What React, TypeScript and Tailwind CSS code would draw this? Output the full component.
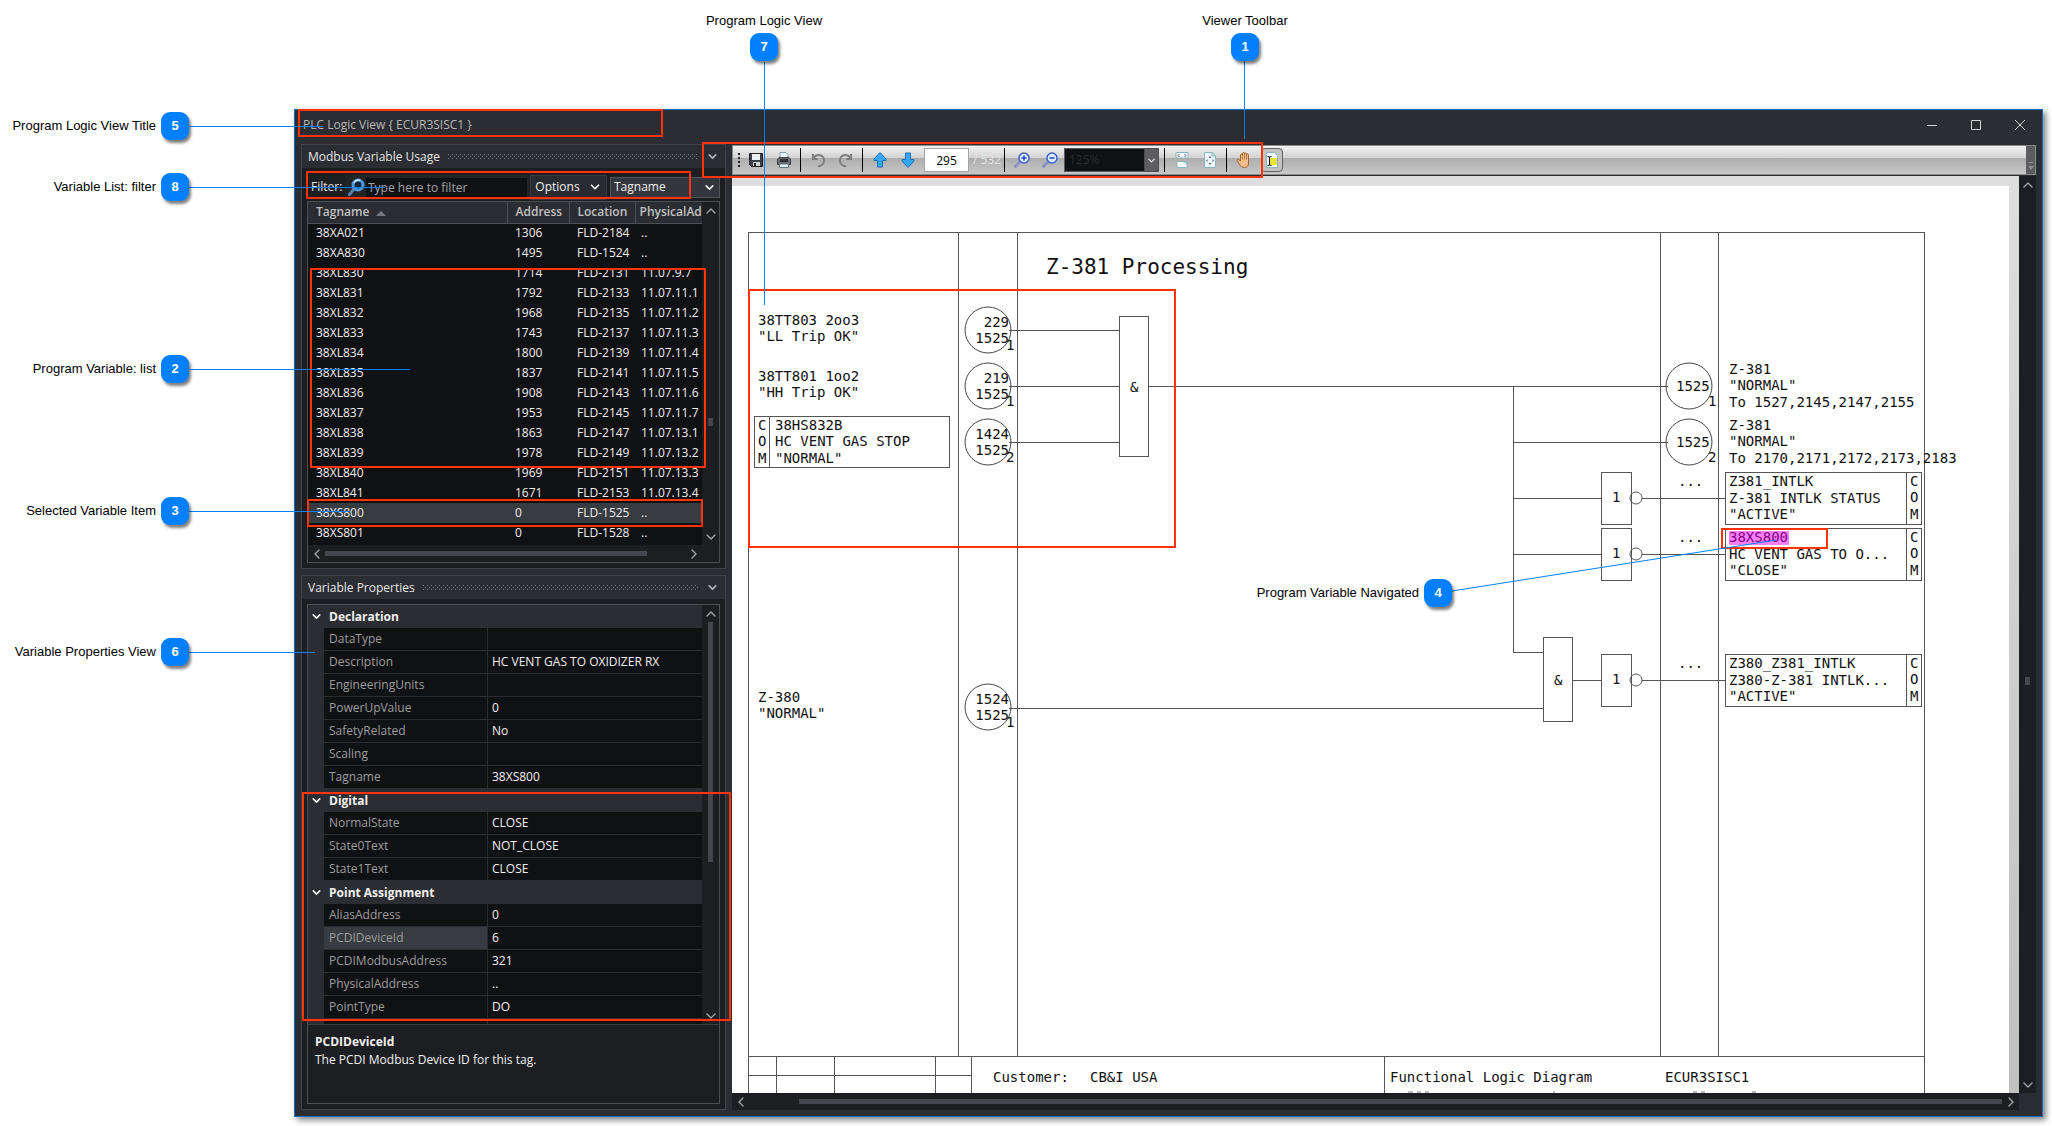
import React from 'react';
import { ChevronDown, ChevronLeft, ChevronRight, ChevronUp } from 'lucide-react';

const variables = [
  ['38XA021', '1306', 'FLD-2184', '..'],
  ['38XA830', '1495', 'FLD-1524', '..'],
  ['38XL830', '1714', 'FLD-2131', '11.07.9.7'],
  ['38XL831', '1792', 'FLD-2133', '11.07.11.1'],
  ['38XL832', '1968', 'FLD-2135', '11.07.11.2'],
  ['38XL833', '1743', 'FLD-2137', '11.07.11.3'],
  ['38XL834', '1800', 'FLD-2139', '11.07.11.4'],
  ['38XL835', '1837', 'FLD-2141', '11.07.11.5'],
  ['38XL836', '1908', 'FLD-2143', '11.07.11.6'],
  ['38XL837', '1953', 'FLD-2145', '11.07.11.7'],
  ['38XL838', '1863', 'FLD-2147', '11.07.13.1'],
  ['38XL839', '1978', 'FLD-2149', '11.07.13.2'],
  ['38XL840', '1969', 'FLD-2151', '11.07.13.3'],
  ['38XL841', '1671', 'FLD-2153', '11.07.13.4'],
  ['38XS800', '0', 'FLD-1525', '..'],
  ['38XS801', '0', 'FLD-1528', '..'],
];

const propertyGroups = [
  {
    title: 'Declaration',
    rows: [
      ['DataType', ''],
      ['Description', 'HC VENT GAS TO OXIDIZER RX'],
      ['EngineeringUnits', ''],
      ['PowerUpValue', '0'],
      ['SafetyRelated', 'No'],
      ['Scaling', ''],
      ['Tagname', '38XS800'],
    ],
  },
  {
    title: 'Digital',
    rows: [
      ['NormalState', 'CLOSE'],
      ['State0Text', 'NOT_CLOSE'],
      ['State1Text', 'CLOSE'],
    ],
  },
  {
    title: 'Point Assignment',
    rows: [
      ['AliasAddress', '0'],
      ['PCDIDeviceId', '6'],
      ['PCDIModbusAddress', '321'],
      ['PhysicalAddress', '..'],
      ['PointType', 'DO'],
      ['', ''],
    ],
  },
];

/* ---------- shared bits ---------- */

const PanelHeader: React.FC<{ title: string }> = ({ title }) => (
  <div className="flex h-[23px] shrink-0 items-center bg-[#2c2d32] pl-[6px] pr-[6px]">
    <h2 className="whitespace-nowrap text-[12px] leading-4 text-[#e6e6e6]">{title}</h2>
    <svg className="ml-2 h-[5px] min-w-0 flex-1" aria-hidden="true">
      <defs>
        <pattern id="grip" width="4" height="4" patternUnits="userSpaceOnUse">
          <rect width="1" height="1" fill="#77787d" />
          <rect x="2" y="2" width="1" height="1" fill="#77787d" />
        </pattern>
      </defs>
      <rect width="100%" height="5" fill="url(#grip)" />
    </svg>
    <button aria-label={`${title} menu`} className="ml-2 text-[#b5b5b8]">
      <ChevronDown size={13} strokeWidth={3} />
    </button>
  </div>
);

interface ScrollProps {
  before: string;
  thumb: string;
}

const VScroll: React.FC<ScrollProps> = ({ before, thumb }) => (
  <div className="flex w-[17px] shrink-0 flex-col items-center bg-[#1d1e22] text-[#a5a5a8]">
    <button aria-label="Scroll up" className="flex h-[17px] items-center"><ChevronUp size={16} /></button>
    <div className="flex min-h-0 flex-1 flex-col">
      <div className={before} />
      <div className={`w-[5px] bg-[#46464e] ${thumb}`} />
    </div>
    <button aria-label="Scroll down" className="flex h-[17px] items-center"><ChevronDown size={16} /></button>
  </div>
);

const HScroll: React.FC<ScrollProps> = ({ before, thumb }) => (
  <div className="flex h-[17px] shrink-0 items-center bg-[#1d1e22] text-[#a5a5a8]">
    <button aria-label="Scroll left" className="flex w-[17px] justify-center"><ChevronLeft size={16} /></button>
    <div className="flex min-w-0 flex-1">
      <div className={before} />
      <div className={`h-[5px] bg-[#46464e] ${thumb}`} />
    </div>
    <button aria-label="Scroll right" className="flex w-[17px] justify-center"><ChevronRight size={16} /></button>
  </div>
);

/* ---------- left column ---------- */

const SearchIcon = () => (
  <svg width="18" height="18" viewBox="0 0 18 18" aria-hidden="true">
    <path d="M6 11 1.500 16.500" stroke="#5a7fae" strokeWidth="3" strokeLinecap="round" />
    <circle cx="10" cy="7" r="5" fill="#14243a" stroke="#4f9be0" strokeWidth="3" />
    <path d="M6 5a4.500 4.500 0 0 1 6-2.500" stroke="#cfe6fa" strokeWidth="1.500" fill="none" />
  </svg>
);

const FilterBar = () => (
  <div className="flex h-[28px] shrink-0 items-center pl-1">
    <label htmlFor="filter" className="w-[34px] text-[12px] leading-4 text-[#e6e6e6]">Filter:</label>
    <div className="flex h-[25px] flex-1 items-center bg-[#232428] pl-[3px] pr-[3px]">
      <SearchIcon />
      <input
        id="filter"
        placeholder="Type here to filter"
        className="h-[19px] w-0 flex-1 bg-[#101113] pl-[2px] text-[12px] text-white outline-none placeholder:text-[#a3a3a3]"
      />
    </div>
    <button className="flex h-[25px] w-[77px] items-center justify-center gap-2 border border-[#38393f] bg-[#2a2b30] text-[12px] text-[#f0f0f0]">
      Options <ChevronDown size={14} strokeWidth={3} />
    </button>
    <div className="relative ml-[3px] h-[21px] w-[110px]">
      <select
        aria-label="Filter column"
        className="block h-full w-full appearance-none border border-[#53545b] bg-[#34363e] pl-[3px] text-[12px] text-[#f0f0f0]"
      >
        <option>Tagname</option>
      </select>
      <ChevronDown size={13} strokeWidth={3} className="pointer-events-none absolute right-1 top-1 text-[#f0f0f0]" />
    </div>
  </div>
);

const VariableTable = () => (
  <div className="flex min-h-0 flex-1 flex-col border border-[#4d4e54] bg-[#101113]">
    <div className="flex min-h-0 flex-1">
      <div className="min-w-0 flex-1 overflow-hidden">
        <table className="w-full table-fixed border-collapse text-left text-[12px] leading-4">
          <colgroup>
            <col className="w-[199px]" />
            <col className="w-[62px]" />
            <col className="w-[66px]" />
            <col />
          </colgroup>
          <thead>
            <tr className="h-[21px] border-b border-[#4d4e54] bg-[#2c2d32] text-[#c0c0c0]">
              <th className="border-r border-[#4d4e54] p-0 pl-2 font-semibold">
                Tagname <span className="ml-1 inline-block border-x-[5px] border-b-[5px] border-x-transparent border-b-[#77787d] align-middle" />
              </th>
              <th className="border-r border-[#4d4e54] p-0 pl-2 font-semibold">Address</th>
              <th className="border-r border-[#4d4e54] p-0 pl-2 font-semibold">Location</th>
              <th className="p-0 pl-1 font-semibold">PhysicalAd</th>
            </tr>
          </thead>
          <tbody>
            {variables.map((row) => (
              <tr key={row[0]} className={row[0] === '38XS800' ? 'h-[20px] bg-[#383b40]' : 'h-[20px]'}>
                {row.map((cell, i) => (
                  <td key={i} className={`whitespace-nowrap p-0 text-[#f0f0f0] ${i === 3 ? 'pl-[6px]' : 'pl-2'}`}>{cell}</td>
                ))}
              </tr>
            ))}
          </tbody>
        </table>
      </div>
      <VScroll before="h-[199px]" thumb="h-2" />
    </div>
    <div className="flex bg-[#1d1e22]">
      <div className="min-w-0 flex-1"><HScroll before="w-0" thumb="w-[322px]" /></div>
      <div className="w-[17px]" />
    </div>
  </div>
);

const PropertyGrid = () => (
  <div className="flex min-h-0 flex-1">
    <div className="min-w-0 flex-1 overflow-hidden bg-[#2c2d32] text-[12px] leading-4">
      {propertyGroups.map((group) => (
        <section key={group.title}>
          <button className="flex h-[23px] w-full items-center font-bold text-[#f0f0f0]">
            <ChevronDown size={13} strokeWidth={3} className="ml-[2px] mr-[6px]" />
            {group.title}
          </button>
          <dl className="ml-4">
            {group.rows.map(([name, value]) => (
              <div key={name} className="flex h-[23px] gap-px pb-px">
                <dt className={`flex w-[163px] items-center pl-[5px] text-[#9d9d9d] ${name === 'PCDIDeviceId' ? 'bg-[#383b40]' : 'bg-[#101113]'}`}>
                  {name}
                </dt>
                <dd className="flex flex-1 items-center bg-[#101113] pl-1 text-[#f0f0f0]">{value}</dd>
              </div>
            ))}
          </dl>
        </section>
      ))}
    </div>
    <VScroll before="h-0" thumb="h-[240px]" />
  </div>
);

const Sidebar = () => (
  <aside className="flex w-[425px] shrink-0 flex-col gap-[6px]">
    <section className="flex h-[425px] flex-col border border-[#424349] bg-[#1d1e22]">
      <PanelHeader title="Modbus Variable Usage" />
      <div className="flex min-h-0 flex-1 flex-col px-[5px] pb-[5px] pt-[5px]">
        <FilterBar />
        <VariableTable />
      </div>
    </section>
    <section className="flex min-h-0 flex-1 flex-col border border-[#424349] bg-[#1d1e22]">
      <PanelHeader title="Variable Properties" />
      <div className="flex min-h-0 flex-1 flex-col p-[5px]">
        <div className="flex min-h-0 flex-1 flex-col border border-[#4d4e54]">
          <PropertyGrid />
          <div className="h-[79px] shrink-0 border-t border-[#3b3c42] pl-[7px] pt-2 text-[12px] leading-[18px] text-[#f0f0f0]">
            <h3 className="font-bold">PCDIDeviceId</h3>
            <p>The PCDI Modbus Device ID for this tag.</p>
          </div>
        </div>
      </div>
    </section>
  </aside>
);

/* ---------- viewer toolbar ---------- */

const ToolButton: React.FC<{ label: string; children: React.ReactNode }> = ({ label, children }) => (
  <button aria-label={label} className="flex h-[24px] w-[28px] items-center justify-center">
    <svg width="16" height="18" viewBox="0 0 16 18" fill="none" aria-hidden="true">{children}</svg>
  </button>
);

const Separator = () => <div className="ml-[2px] mr-[3px] h-[24px] w-px bg-black" />;

const Arrow = () => (
  <path d="M8 1.500 14 8v1.500h-3.500V16h-5V9.500H2V8z" fill="#35a8f5" stroke="#1c6fc0" />
);

const Lens: React.FC<{ plus?: boolean }> = ({ plus }) => (
  <>
    <path d="M6 10.500 1.500 15.500" stroke="#8d90c4" strokeWidth="3" strokeLinecap="round" />
    <circle cx="10" cy="7" r="5" fill="#dcecff" stroke="#3f5fd0" strokeWidth="1.500" />
    <path d={plus ? 'M7.500 7h5M10 4.500v5' : 'M7.500 7h5'} stroke="#2545b8" strokeWidth="1.500" />
  </>
);

const Toolbar = () => (
  <div className="mt-px flex h-[30px] shrink-0 items-center border border-[#8b8b8b] bg-[linear-gradient(#f2f2f2,#d2d2d2_42%,#adadad_44%,#c8c8c8)]">
    <div className="ml-[5px] flex w-[2px] flex-col gap-[2px]">
      <div className="size-[2px] bg-[#222]" />
      <div className="size-[2px] bg-[#222]" />
      <div className="size-[2px] bg-[#222]" />
      <div className="size-[2px] bg-[#222]" />
    </div>
    <div className="ml-[2px] flex items-center">
      <ToolButton label="Save">
        <path d="M1.500 2.500h13v13h-11l-2-2z" fill="#3c3f44" stroke="#222" />
        <path d="M4 3h8v6H4z" fill="#e9eef2" />
        <path d="M5 11h7v4H5z" fill="#d0d4d8" />
        <path d="M6 12h2v3H6z" fill="#222" />
      </ToolButton>
      <ToolButton label="Print">
        <path d="M4 1.500h6l2 2V8H4z" fill="#eaf6fa" stroke="#7fa4ae" />
        <path d="M1.500 8.500 3 6.500h10l1.500 2v5h-13z" fill="#6b6e73" stroke="#3c3f44" />
        <path d="M4 8h8v3H4z" fill="#2b2d30" />
        <path d="M3.500 13h9v3.500h-9z" fill="#d9f0f5" stroke="#6b6e73" />
      </ToolButton>
      <Separator />
      <ToolButton label="Previous view">
        <path d="M3 3v5h5M3.500 7.500A5.500 5.500 0 1 1 8 15" stroke="#808080" strokeWidth="2.200" />
      </ToolButton>
      <ToolButton label="Next view">
        <path d="M13 3v5H8M12.500 7.500A5.500 5.500 0 1 0 8 15" stroke="#808080" strokeWidth="2.200" />
      </ToolButton>
      <Separator />
      <ToolButton label="Previous page"><Arrow /></ToolButton>
      <ToolButton label="Next page">
        <g transform="rotate(180 8 9)"><Arrow /></g>
      </ToolButton>
    </div>
    <input
      aria-label="Page"
      defaultValue="295"
      className="ml-[2px] h-[24px] w-[45px] border border-[#a5a5a5] bg-white text-center text-[12px] text-black"
    />
    <span className="w-[33px] whitespace-nowrap pl-1 text-[12px] text-[#e4e4e4]">/ 532</span>
    <Separator />
    <ToolButton label="Zoom in"><Lens plus /></ToolButton>
    <ToolButton label="Zoom out"><Lens /></ToolButton>
    <div className="relative h-[24px] w-[95px]">
      <select
        aria-label="Zoom"
        className="block h-full w-full appearance-none border border-[#5a5a5e] bg-[#101113] pl-1 text-[12px] text-[#2b2b2e]"
      >
        <option>125%</option>
      </select>
      <span className="pointer-events-none absolute right-0 top-0 flex h-full w-[15px] items-center justify-center rounded-r-sm border border-[#4d4d50] bg-[#5e5e60] text-[#dcdcdc]">
        <ChevronDown size={11} strokeWidth={3} />
      </span>
    </div>
    <div className="w-[3px]" />
    <Separator />
    <ToolButton label="Fit width">
      <path d="M2 1.500h12V7H2z" fill="#f4fbfc" stroke="#8fb3bb" />
      <path d="M5.500 3 4 4.500 5.500 6M10.500 3 12 4.500 10.500 6" stroke="#50686e" />
      <path d="M3 10.500h10v6H3z" fill="#f4fbfc" stroke="#8fb3bb" />
      <path d="M9 11h4v3z" fill="#a8ccd4" />
    </ToolButton>
    <ToolButton label="Fit page">
      <path d="M2.500 1.500h8l3 3v12h-11z" fill="#eef9fb" stroke="#8fb3bb" />
      <path d="M10 1.500v3.500h3.500" stroke="#8fb3bb" fill="#c4e0e6" />
      <path d="m8 5 1.500 2h-3zM8 14l1.500-2h-3zM4 9.500 5.500 8v3zM12 9.500 10.500 8v3z" fill="#50686e" />
    </ToolButton>
    <Separator />
    <ToolButton label="Pan">
      <path
        d="M4.500 10V4a1 1 0 0 1 2 0v-1.500a1 1 0 0 1 2 0V3a1 1 0 0 1 2 0v1a1 1 0 0 1 2 0v8c0 3-1.500 4.500-4 4.500-3 0-4-1.500-5.500-4L1 9.500c0-1 1.500-1.500 2.200-.5z"
        fill="#f0bd8c"
        stroke="#a5662c"
      />
      <path d="M6.500 4v4.500M8.500 3v5.500M10.500 4v4.500" stroke="#b97a40" />
    </ToolButton>
    <button aria-label="Select text" className="ml-[3px] flex h-[24px] w-[22px] items-center justify-center rounded border border-[#606060] bg-[#c2c2c2]">
      <svg width="16" height="18" viewBox="0 0 16 18" fill="none" aria-hidden="true">
        <path d="M2.500 1.500h8l3 3v12h-11z" fill="#eef9fb" stroke="#8fb3bb" />
        <path d="M6 7h7v7H6z" fill="#e6e23c" />
        <path d="M5.500 5.500v9M3.500 5.500q2 0 2 1 0-1 2-1M3.500 14.500q2 0 2-1 0 1 2 1" stroke="#111" />
      </svg>
    </button>
    <div className="ml-auto flex h-full w-[9px] flex-col items-center justify-end gap-[3px] bg-[#5c5c5e] pb-1">
      <div className="h-px w-[5px] bg-[#8f8f91]" />
      <div className="border-x-[3px] border-t-[4px] border-x-transparent border-t-[#8f8f91]" />
    </div>
  </div>
);

/* ---------- logic diagram ---------- */

interface LinesProps {
  x: number;
  y: number;
  lines: string[];
}

const Lines: React.FC<LinesProps> = ({ x, y, lines }) => (
  <>
    {lines.map((line, i) => (
      <text key={i} x={x} y={Math.round(y + i * 16.4)}>{line}</text>
    ))}
  </>
);

const InputRef: React.FC<{ y: number; top: string; index: string }> = ({ y, top, index }) => (
  <g>
    <circle cx="988" cy={y} r="23" fill="none" stroke="#444" />
    <text x="1009" y={y - 3} textAnchor="end">{top}</text>
    <text x="1009" y={y + 13} textAnchor="end">1525</text>
    <text x="1006" y={y + 20}>{index}</text>
  </g>
);

const OutputRef: React.FC<{ y: number; index: string; to: string }> = ({ y, index, to }) => (
  <g>
    <circle cx="1689" cy={y} r="23" fill="none" stroke="#444" />
    <text x="1676" y={y + 5}>1525</text>
    <text x="1708" y={y + 20}>{index}</text>
    <Lines x={1729} y={y - 12} lines={['Z-381', '"NORMAL"', to]} />
  </g>
);

const OutputBlock: React.FC<{ y: number; lines: string[]; selected?: boolean }> = ({ y, lines, selected }) => (
  <g>
    <g fill="none" stroke="#555">
      <rect x="1601" y={y} width="30" height="52" shapeRendering="crispEdges" />
      <circle cx="1636" cy={y + 26} r="6" />
      <path d={`M1642 ${y + 26}H1725`} shapeRendering="crispEdges" />
      <rect x="1725" y={y} width="196" height="52" shapeRendering="crispEdges" />
      <path d={`M1906 ${y}v52`} shapeRendering="crispEdges" />
    </g>
    <text x="1612" y={y + 30}>1</text>
    <text x="1678" y={y + 14}>...</text>
    {selected && <rect x="1729" y={y + 3} width="60" height="14" fill="#ff80ff" />}
    <g fill={selected ? '#800080' : '#111'}>
      <text x="1729" y={y + 14}>{lines[0]}</text>
    </g>
    <Lines x={1729} y={y + 31} lines={lines.slice(1)} />
    <Lines x={1910} y={y + 14} lines={['C', 'O', 'M']} />
  </g>
);

const LogicDiagram = () => (
  <svg
    viewBox="732 186 1277 907"
    preserveAspectRatio="xMinYMin slice"
    className="h-full w-full bg-white font-['DejaVu_Sans_Mono',monospace] text-[14px]"
    fill="#111"
    role="img"
    aria-label="Z-381 Processing logic diagram"
  >
    {/* Sheet frame and title block */}
    <g fill="none" stroke="#555" shapeRendering="crispEdges">
      <path d="M748 1100V232H1924V1100M748 1056H1924" />
      <path d="M958 232V1056M1017 232V1056M1660 232V1056M1718 232V1056" />
      <path d="M776 1056V1100M834 1056V1100M935 1056V1100M971 1056V1100M748 1075H971M1384 1056V1100" />
    </g>
    <text x="1046" y="274" className="text-[21px]">Z-381 Processing</text>

    {/* Wiring */}
    <g fill="none" stroke="#555" shapeRendering="crispEdges">
      <path d="M1009 330H1119M1009 386H1119M1009 442H1119" />
      <path d="M1148 386H1668M1513 386V652H1543M1513 442H1668M1513 498H1601M1513 554H1601" />
      <path d="M1009 708H1543M1572 680H1601" />
      <rect x="1119" y="316" width="29" height="140" />
      <rect x="1543" y="637" width="29" height="84" />
      <rect x="754" y="416" width="195" height="51" />
      <path d="M769 416V467" />
    </g>
    <text x="1130" y="392">&amp;</text>
    <text x="1554" y="685">&amp;</text>

    {/* Inputs */}
    <Lines x={758} y={325} lines={['38TT803 2oo3', '"LL Trip OK"']} />
    <Lines x={758} y={381} lines={['38TT801 1oo2', '"HH Trip OK"']} />
    <Lines x={758} y={430} lines={['C', 'O', 'M']} />
    <Lines x={775} y={430} lines={['38HS832B', 'HC VENT GAS STOP', '"NORMAL"']} />
    <Lines x={758} y={702} lines={['Z-380', '"NORMAL"']} />
    <InputRef y={330} top="229" index="1" />
    <InputRef y={386} top="219" index="1" />
    <InputRef y={442} top="1424" index="2" />
    <InputRef y={707} top="1524" index="1" />

    {/* Outputs */}
    <OutputRef y={386} index="1" to="To 1527,2145,2147,2155" />
    <OutputRef y={442} index="2" to="To 2170,2171,2172,2173,2183" />
    <OutputBlock y={472} lines={['Z381_INTLK', 'Z-381 INTLK STATUS', '"ACTIVE"']} />
    <OutputBlock y={528} lines={['38XS800', 'HC VENT GAS TO O...', '"CLOSE"']} selected />
    <OutputBlock y={654} lines={['Z380_Z381_INTLK', 'Z380-Z-381 INTLK...', '"ACTIVE"']} />

    <text x="993" y="1082">Customer:</text>
    <text x="1090" y="1082">CB&amp;I USA</text>
    <text x="1390" y="1082">Functional Logic Diagram</text>
    <text x="1665" y="1082">ECUR3SISC1</text>
    {/* The next title block row starts just under the fold */}
    <path d="M1408 1092h5m4 0h4m4 0h4M1553 1092h2M1693 1092h4m4 0h4M1752 1092h4" stroke="#777" fill="none" />
  </svg>
);

const Viewer = () => (
  <main className="flex min-w-0 flex-1 flex-col">
    <Toolbar />
    <div className="mt-px flex min-h-0 flex-1">
      <div className="flex min-w-0 flex-1 flex-col">
        <div className="min-h-0 flex-1 bg-[linear-gradient(#dedede,#c0c0c0)] pr-[10px] pt-[10px]">
          <LogicDiagram />
        </div>
        <HScroll before="w-[50px]" thumb="flex-1" />
      </div>
      <div className="flex flex-col">
        <div className="flex min-h-0 flex-1"><VScroll before="h-[484px]" thumb="h-2" /></div>
        <div className="h-[17px]" />
      </div>
    </div>
  </main>
);

/* ---------- callouts ---------- */

const badges = [
  { n: 5, text: 'Program Logic View Title', side: 'left', place: 'left-0 top-[112px] w-[189px]' },
  { n: 8, text: 'Variable List: filter', side: 'left', place: 'left-0 top-[173px] w-[189px]' },
  { n: 2, text: 'Program Variable: list', side: 'left', place: 'left-0 top-[355px] w-[189px]' },
  { n: 3, text: 'Selected Variable Item', side: 'left', place: 'left-0 top-[497px] w-[189px]' },
  { n: 6, text: 'Variable Properties View', side: 'left', place: 'left-0 top-[638px] w-[189px]' },
  { n: 4, text: 'Program Variable Navigated', side: 'left', place: 'left-[1240px] top-[579px] w-[212px]' },
  { n: 7, text: 'Program Logic View', side: 'top', place: 'left-[694px] top-[13px] w-[140px]' },
  { n: 1, text: 'Viewer Toolbar', side: 'top', place: 'left-[1175px] top-[13px] w-[140px]' },
];

const Callouts = () => (
  <div className="pointer-events-none absolute inset-0 font-['Liberation_Sans',Arial,sans-serif]">
    <svg className="absolute inset-0 h-full w-full" fill="none" shapeRendering="crispEdges" aria-hidden="true">
      <g stroke="#ff3300" strokeWidth="2">
        <rect x="299" y="110" width="363" height="26" />
        <rect x="307" y="172" width="383" height="26" />
        <rect x="703" y="143" width="559" height="34" />
        <rect x="311" y="269" width="394" height="198" />
        <rect x="308" y="500" width="394" height="26" />
        <rect x="303" y="793" width="427" height="227" />
        <rect x="749" y="290" width="426" height="257" />
        <rect x="1722" y="529" width="105" height="19" />
      </g>
      <g stroke="#0080ff">
        <path d="M189 126H323M189 187H385M189 369H410M189 511H350M189 652H315" />
        <path d="M764 62V305M1244 61V139" />
        <path d="M1452 591 1776 540" shapeRendering="auto" />
      </g>
    </svg>
    {badges.map((b) => (
      <div
        key={b.n}
        className={`absolute flex items-center text-[13px] leading-4 text-black ${b.place} ${b.side === 'left' ? 'justify-end gap-[5px]' : 'flex-col gap-1'}`}
      >
        <span className="whitespace-nowrap">{b.text}</span>
        <span className="flex size-7 shrink-0 items-center justify-center rounded-[9px] bg-[#0080ff] font-bold text-white shadow-[2px_3px_3px_rgba(0,0,0,0.5)]">
          {b.n}
        </span>
      </div>
    ))}
  </div>
);

export default function App() {
  return (
    <div className="relative flex h-screen bg-white pb-[9px] pl-[294px] pr-[9px] pt-[109px] font-['Open_Sans','Noto_Sans',sans-serif]">
      <div className="flex min-w-0 flex-1 flex-col border border-[#0a70c0] bg-[#2c2d32] shadow-[3px_3px_6px_rgba(0,0,0,0.5)]">
        <header className="flex h-[34px] shrink-0 items-center pl-2 pr-[16px]">
          <h1 className="mt-[-4px] text-[12px] leading-4 text-[#b8b8b8]">{'PLC Logic View { ECUR3SISC1 }'}</h1>
          <div className="mb-1 ml-auto flex gap-[32px] text-[#d4d4d4]">
            <button aria-label="Minimize">
              <svg width="12" height="12" stroke="currentColor"><path d="M1 6.500h10" /></svg>
            </button>
            <button aria-label="Maximize">
              <svg width="12" height="12" stroke="currentColor" fill="none"><path d="M1.500 1.500h9v9h-9z" /></svg>
            </button>
            <button aria-label="Close">
              <svg width="12" height="12" stroke="currentColor"><path d="m1 1 10 10M11 1 1 11" /></svg>
            </button>
          </div>
        </header>
        <div className="flex min-h-0 flex-1 gap-[6px] px-[6px] pb-[6px]">
          <Sidebar />
          <Viewer />
        </div>
      </div>
      <Callouts />
    </div>
  );
}
